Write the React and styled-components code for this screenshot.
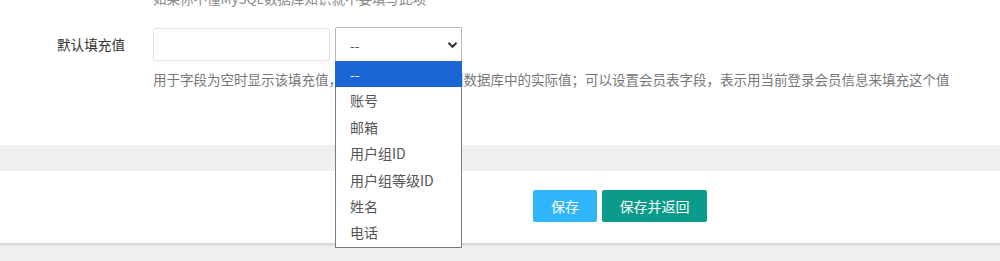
import React from 'react'
import styled, { createGlobalStyle } from 'styled-components'

const GlobalStyle = createGlobalStyle`
    html, body {
        margin: 0;
        padding: 0;
        background: #ffffff;
        font-family: "Noto Sans CJK SC", "Noto Sans", "Liberation Sans", sans-serif;
        overflow: hidden;
    }
`

const fillOptions = ['--', '账号', '邮箱', '用户组ID', '用户组等级ID', '姓名', '电话']

const Chevron = () => (
    <svg width="11" height="8" viewBox="0 0 11 8">
        <path d="M1.5 1.8 L5.5 5.8 L9.5 1.8" fill="none" stroke="#333" strokeWidth="2" />
    </svg>
)

export default function App() {
    return (
        <Page>
            <GlobalStyle />
            <FormArea>
                <TopTip>如果你不懂MySQL数据库知识就不要填写此项</TopTip>
                <FormRow>
                    <Label>默认填充值</Label>
                    <Field>
                        <Controls>
                            <TextInput />
                            <SelectWrap>
                                <SelectBox>
                                    <span>--</span>
                                    <Chevron />
                                </SelectBox>
                                <OptionList>
                                    {fillOptions.map((o, i) => (
                                        <OptionItem key={o} active={i === 0}>{o}</OptionItem>
                                    ))}
                                </OptionList>
                            </SelectWrap>
                        </Controls>
                        <Tip>用于字段为空时显示该填充值，并不会真正地更新到数据库中的实际值；可以设置会员表字段，表示用当前登录会员信息来填充这个值</Tip>
                    </Field>
                </FormRow>
            </FormArea>
            <Band />
            <ActionPanel>
                <Button color="#30b5fb" width="64px">保存</Button>
                <Button color="#0b9b8b" width="105px">保存并返回</Button>
            </ActionPanel>
            <Bottom />
        </Page>
    )
}

const Page = styled.div`
    width: 1000px;
    height: 261px;
    display: flex;
    flex-direction: column;
`

const FormArea = styled.div`
    height: 145px;
    flex-shrink: 0;
    position: relative;
    z-index: 2;
`

const TopTip = styled.div`
    margin-top: -12px;
    padding-left: 153px;
    font-size: 13.5px;
    line-height: 20px;
    color: #8a8a8a;
`

const FormRow = styled.div`
    display: flex;
    margin-top: 20px;
`

const Label = styled.div`
    width: 125px;
    padding-right: 28px;
    text-align: right;
    font-size: 13.6px;
    line-height: 33px;
    color: #333;
`

const Field = styled.div`
    display: flex;
    flex-direction: column;
`

const Controls = styled.div`
    display: flex;
    gap: 5px;
    align-items: flex-start;
`

const TextInput = styled.div`
    box-sizing: border-box;
    width: 177px;
    height: 33px;
    border: 1px solid #e2e2e2;
    border-radius: 2px;
    background: #fff;
`

const SelectWrap = styled.div`
    position: relative;
    margin-top: -1px;
`

const SelectBox = styled.div`
    box-sizing: border-box;
    width: 127px;
    height: 34px;
    border: 1px solid #b3b9c4;
    border-bottom: none;
    border-radius: 2px 2px 0 0;
    display: flex;
    align-items: center;
    justify-content: space-between;
    padding: 0 3px 0 14px;
    font-size: 13.6px;
    color: #555;
    background: #fff;

    svg {
        margin-top: 1px;
    }
`

const OptionList = styled.div`
    position: absolute;
    top: 34px;
    left: 0;
    box-sizing: border-box;
    width: 127px;
    border: 1px solid #7a7a7a;
    border-top: none;
    background: #fff;
    padding-bottom: 1px;
`

const OptionItem = styled.div`
    height: 26.4px;
    line-height: 27px;
    padding-left: 15px;
    font-size: 14px;
    color: ${p => (p.active ? '#ffffff' : '#555')};
    background: ${p => (p.active ? '#1a66d4' : 'transparent')};
    margin: 0 -1px;
`

const Tip = styled.div`
    margin-top: 8px;
    font-size: 13.5px;
    line-height: 20px;
    color: #777;
    white-space: nowrap;
`

const Band = styled.div`
    height: 25px;
    flex-shrink: 0;
    background: #eeeff1;
    border-bottom: 1px solid #f3f3f5;
`

const ActionPanel = styled.div`
    height: 72px;
    flex-shrink: 0;
    box-sizing: border-box;
    display: flex;
    align-items: flex-start;
    gap: 5px;
    padding: 19px 0 0 533px;
    background: #fff;
    box-shadow: 0 2px 2px rgba(0, 0, 0, 0.12);
    position: relative;
    z-index: 1;
`

const Button = styled.div`
    width: ${p => p.width};
    height: 32px;
    border-radius: 2px;
    background: ${p => p.color};
    color: #fff;
    font-size: 14px;
    display: flex;
    align-items: center;
    justify-content: center;
`

const Bottom = styled.div`
    flex: 1;
    background: #eeeff1;
`
